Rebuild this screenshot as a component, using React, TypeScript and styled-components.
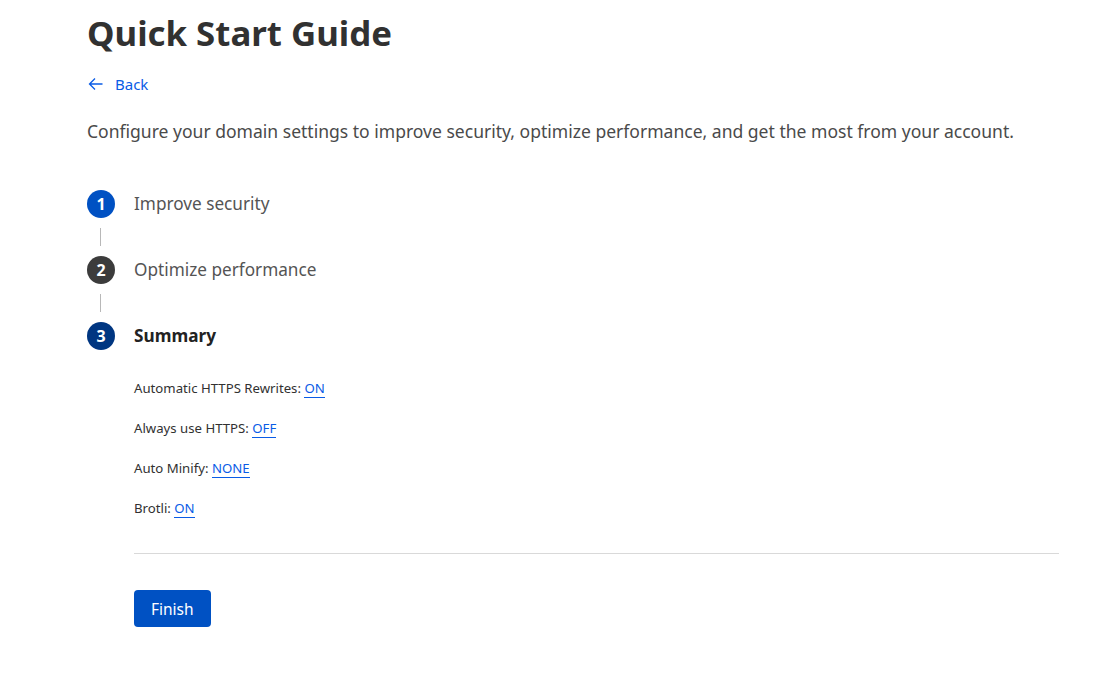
import React from "react";
import styled, { createGlobalStyle } from "styled-components";

const Global = createGlobalStyle`
  html, body { margin: 0; padding: 0; background: #fff; }
  body { font-family: "Noto Sans", "Noto Sans CJK KR", sans-serif; color: #313131; }
`;

const Page = styled.main`
  padding: 8px 58px 40px 87px;
  display: flex;
  flex-direction: column;
`;

const Title = styled.h1`
  margin: 0;
  font-size: 34.8px;
  font-weight: 700;
  line-height: 50px;
  color: #313131;
`;

const BackLink = styled.a`
  display: inline-flex;
  align-items: center;
  gap: 12px;
  margin-top: 14px;
  padding-left: 1px;
  color: #0a5ce6;
  font-size: 15px;
  line-height: 24px;
  text-decoration: none;
  align-self: flex-start;
`;

const Intro = styled.p`
  margin: 22px 0 0;
  font-size: 17.55px;
  line-height: 26px;
  color: #4a4a4a;
`;

const Steps = styled.ol`
  list-style: none;
  margin: 46px 0 0;
  padding: 0;
  display: flex;
  flex-direction: column;
`;

const Step = styled.li`
  display: grid;
  grid-template-columns: 28px 1fr;
  column-gap: 19px;
`;

const Marker = styled.div`
  display: flex;
  flex-direction: column;
  align-items: center;
`;

const Circle = styled.span<{ $bg: string }>`
  width: 28px;
  height: 28px;
  border-radius: 50%;
  background: ${(p) => p.$bg};
  color: #fff;
  font-weight: 700;
  font-size: 16px;
  display: flex;
  align-items: center;
  justify-content: center;
  flex: none;
`;

const Connector = styled.span`
  width: 1px;
  height: 18px;
  margin: 10px 0 10px -1px;
  background: #b8b8b8;
`;

const StepLabel = styled.div<{ $active?: boolean }>`
  font-size: 17.2px;
  line-height: 28px;
  font-weight: ${(p) => (p.$active ? 700 : 400)};
  color: ${(p) => (p.$active ? "#222" : "#545454")};
`;

const Body = styled.div`
  grid-column: 2;
  display: flex;
  flex-direction: column;
  padding-top: 28px;
`;

const Setting = styled.div`
  font-size: 13.2px;
  line-height: 20px;
  color: #313131;
  & + & { margin-top: 20px; }
`;

const Value = styled.a`
  color: #0a5ce6;
  text-decoration: none;
  border-bottom: 1px solid #0a5ce6;
`;

const Divider = styled.hr`
  margin: 35px 0 0;
  border: none;
  border-top: 1px solid #d9d9d9;
`;

const Finish = styled.button`
  margin-top: 36px;
  align-self: flex-start;
  background: #0051c3;
  color: #fff;
  border: none;
  border-radius: 4px;
  height: 37px;
  padding: 0 17px;
  font-family: inherit;
  font-size: 15.5px;
`;

const ArrowLeft = () => (
  <svg width="15" height="14" viewBox="0 0 15 14" fill="none" stroke="currentColor" strokeWidth="1.3">
    <path d="M14.5 7H1.5M7 1.5L1.5 7l5.5 5.5" />
  </svg>
);

const steps = [
  { n: 1, label: "Improve security", bg: "#0051c3" },
  { n: 2, label: "Optimize performance", bg: "#3c3c3c" },
  { n: 3, label: "Summary", bg: "#003681", active: true },
];

const settings = [
  ["Automatic HTTPS Rewrites", "ON"],
  ["Always use HTTPS", "OFF"],
  ["Auto Minify", "NONE"],
  ["Brotli", "ON"],
];

export default function App() {
  return (
    <>
      <Global />
      <Page>
        <Title>Quick Start Guide</Title>
        <BackLink href="#">
          <ArrowLeft />
          Back
        </BackLink>
        <Intro>
          Configure your domain settings to improve security, optimize performance, and get the most from your account.
        </Intro>
        <Steps>
          {steps.map((s, i) => (
            <Step key={s.n}>
              <Marker>
                <Circle $bg={s.bg}>{s.n}</Circle>
                {i < steps.length - 1 && <Connector />}
              </Marker>
              <StepLabel $active={s.active}>{s.label}</StepLabel>
              {s.active && (
                <Body>
                  {settings.map(([k, v]) => (
                    <Setting key={k}>
                      {k}: <Value href="#">{v}</Value>
                    </Setting>
                  ))}
                  <Divider />
                  <Finish>Finish</Finish>
                </Body>
              )}
            </Step>
          ))}
        </Steps>
      </Page>
    </>
  );
}
